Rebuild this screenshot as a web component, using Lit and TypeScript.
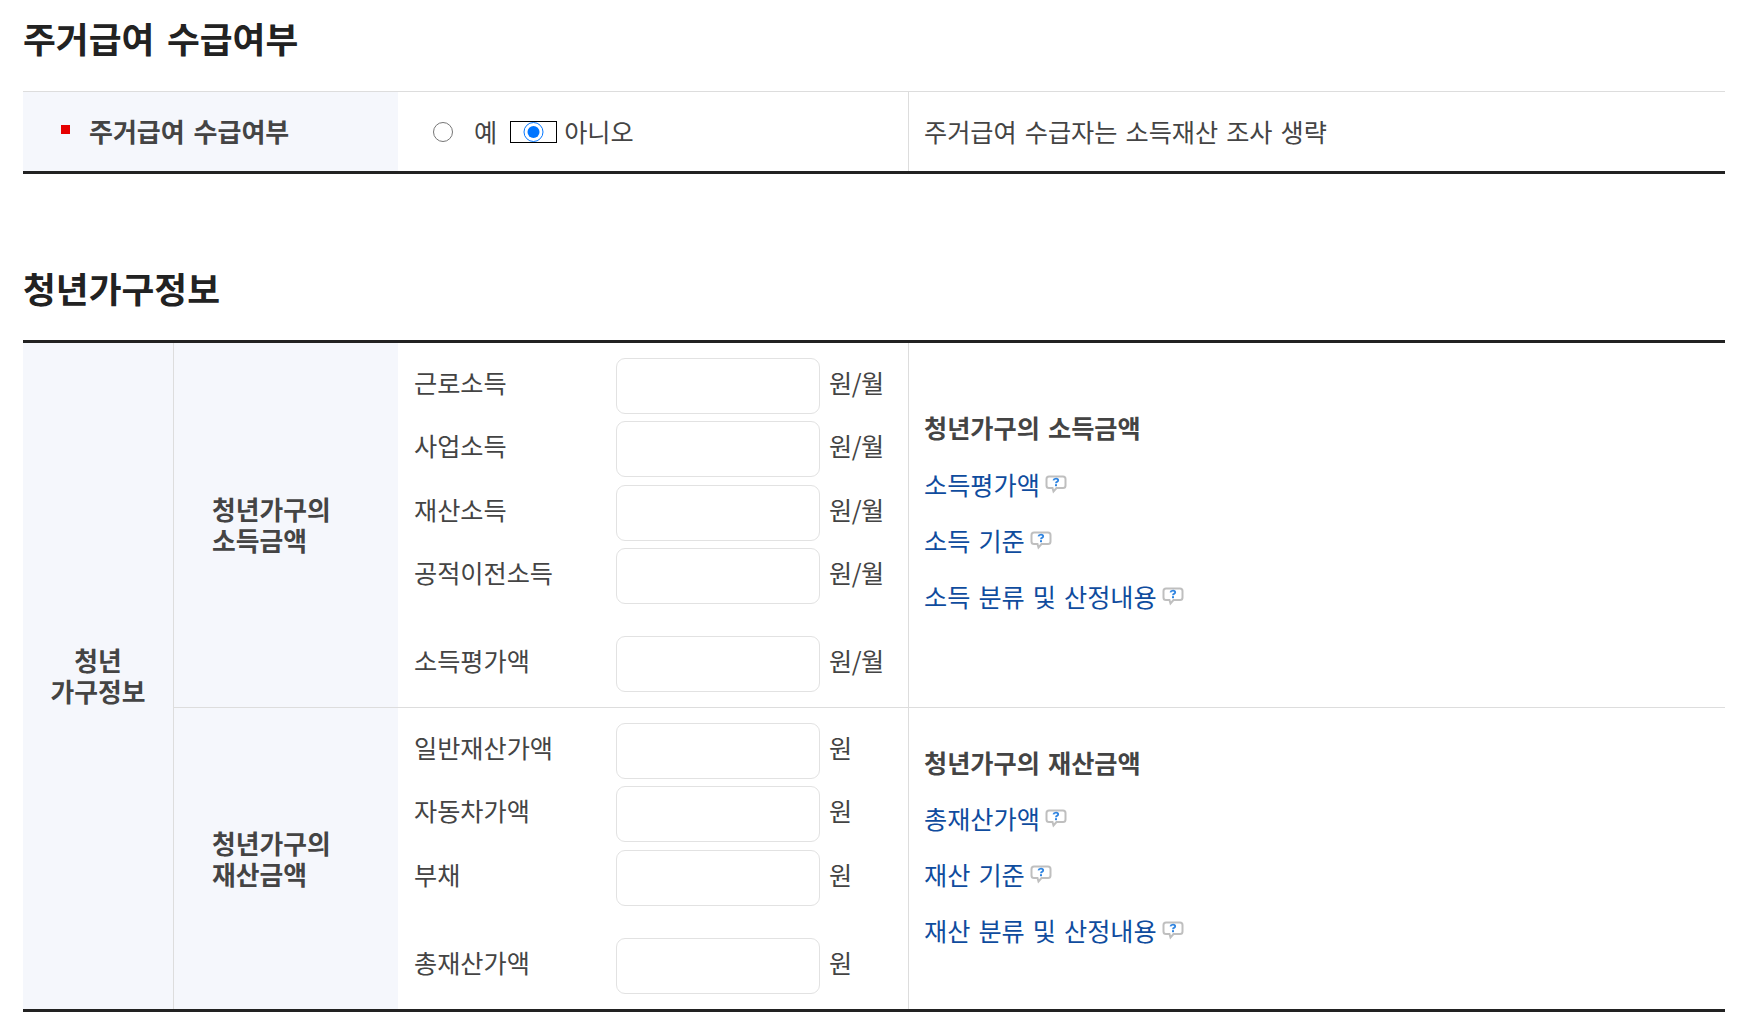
import { LitElement, html, css, svg } from "lit";
import { customElement } from "lit/decorators.js";

const helpIcon = html`<svg class="help" width="22" height="19" viewBox="0 0 22 19" aria-hidden="true">
  <path d="M4 1.5H18Q20.5 1.5 20.5 4V10.5Q20.5 13 18 13H11.5L8.5 16.5L7.5 13H4Q1.5 13 1.5 10.5V4Q1.5 1.5 4 1.5Z" fill="#fff" stroke="#bfbfbf" stroke-width="2"/>
  ${svg`<path d="M8.4 5.4Q8.8 3.6 11 3.6Q13.2 3.6 13.2 5.3Q13.2 6.3 12 6.8Q11 7.2 11 8.2" fill="none" stroke="#2f84e0" stroke-width="1.8"/><rect x="10" y="9.2" width="2" height="2" fill="#2f84e0"/>`}
</svg>`;

interface Field { label: string; unit: string; last?: boolean }

const income: Field[] = [
  { label: "근로소득", unit: "원/월" },
  { label: "사업소득", unit: "원/월" },
  { label: "재산소득", unit: "원/월" },
  { label: "공적이전소득", unit: "원/월" },
  { label: "소득평가액", unit: "원/월", last: true },
];
const assets: Field[] = [
  { label: "일반재산가액", unit: "원" },
  { label: "자동차가액", unit: "원" },
  { label: "부채", unit: "원" },
  { label: "총재산가액", unit: "원", last: true },
];

@customElement("app-root")
export class AppRoot extends LitElement {
  static styles = css`
    :host {
      display: block;
      width: 1746px;
      height: 1018px;
      box-sizing: border-box;
      padding: 0 21px 0 23px;
      background: #fff;
      font-family: "Noto Sans CJK KR", "Noto Sans", sans-serif;
      font-size: 25.2px;
      word-spacing: 2.4px;
      color: #444;
      overflow: hidden;
    }
    h2 {
      margin: 0;
      font-size: 35.7px;
      font-weight: 700;
      color: #222;
      line-height: 50px;
      word-spacing: 4.5px;
    }
    .t1 { padding-top: 13px; height: 91px; box-sizing: border-box; }
    .t2wrap { height: 166px; padding-top: 89px; box-sizing: border-box; }
    .single {
      display: grid;
      grid-template-columns: 375px 510px 1fr;
      height: 83px;
      box-sizing: border-box;
      border-top: 1px solid #ddd;
      border-bottom: 3px solid #222;
    }
    .th1 {
      background: #f5f7fc;
      font-weight: 700;
      font-size: 26px;
      word-spacing: 3px;
      display: flex;
      align-items: center;
      padding: 0 0 2px 38px;
      gap: 19px;
    }
    .bullet { width: 9px; height: 9px; background: #e60000; margin-top: -2px; }
    .radios {
      display: flex;
      align-items: center;
      padding-left: 35px;
    }
    .radios span { margin-top: -2px; }
    .radios input { margin: 0; width: 20px; height: 20px; }
    .radios .no { width: 45px; height: 20px; outline: 1px solid #000; margin-left: 14px; margin-right: 8px; }
    .radios .yes-l { margin-left: 21px; }
    .note {
      border-left: 1px solid #ddd;
      display: flex;
      align-items: center;
      padding: 0 0 2px 15px;
    }
    .main {
      display: grid;
      grid-template-columns: 151px 1fr;
      border-top: 3px solid #222;
      border-bottom: 3px solid #222;
      height: 672px;
      box-sizing: border-box;
    }
    .side, .gname { font-size: 25.8px; }
    .side {
      background: #f5f7fc;
      border-right: 1px solid #ddd;
      font-weight: 700;
      display: flex;
      align-items: center;
      justify-content: center;
      text-align: center;
      line-height: 31px;
      padding-bottom: 3px;
      box-sizing: border-box;
    }
    .groups { display: grid; grid-template-rows: 364px 1fr; }
    .group {
      display: grid;
      grid-template-columns: 224px 510px 1fr;
    }
    .group + .group { border-top: 1px solid #ddd; }
    .gname {
      background: #f5f7fc;
      font-weight: 700;
      line-height: 31px;
      padding: 0 0 2px 38px;
      display: flex;
      align-items: center;
    }
    .fields { padding: 15px 0 0 16px; }
    .field {
      display: grid;
      grid-template-columns: 202px 204px 1fr;
      align-items: center;
      height: 56px;
      margin-bottom: 7.4px;
    }
    .field.last { margin-top: 31.6px; }
    .group + .group .field.last { margin-top: 32.6px; }
    .field span { position: relative; top: -4px; white-space: nowrap; }
    .field .unit { padding-left: 9px; letter-spacing: -0.5px; }
    .field input {
      width: 204px;
      height: 56px;
      box-sizing: border-box;
      border: 1px solid #e2e2e2;
      border-radius: 9px;
      background: #fff;
      margin: 0;
      padding: 0;
    }
    .info {
      border-left: 1px solid #ddd;
      padding: 66px 0 0 15px;
    }
    .info.second { padding-top: 36px; }
    .info h3 { margin: 0 0 19px; font-size: inherit; font-weight: 700; line-height: 37px; }
    .info.second h3 { margin-bottom: 18px; }
    .info a {
      display: flex;
      align-items: center;
      gap: 5px;
      color: #0f4c9e;
      text-decoration: none;
      height: 37px;
      margin-bottom: 19.3px;
    }
    .help { margin-top: 1px; }
  `;

  private field(f: Field) {
    return html`<div class="field ${f.last ? "last" : ""}">
      <span>${f.label}</span><input type="text" /><span class="unit">${f.unit}</span>
    </div>`;
  }

  private link(text: string) {
    return html`<a href="#">${text}${helpIcon}</a>`;
  }

  render() {
    return html`
      <div class="t1"><h2>주거급여 수급여부</h2></div>
      <div class="single">
        <div class="th1"><i class="bullet"></i>주거급여 수급여부</div>
        <div class="radios">
          <input type="radio" name="r" /><span class="yes-l">예</span>
          <input class="no" type="radio" name="r" checked /><span>아니오</span>
        </div>
        <div class="note">주거급여 수급자는 소득재산 조사 생략</div>
      </div>
      <div class="t2wrap"><h2>청년가구정보</h2></div>
      <div class="main">
        <div class="side"><div>청년<br />가구정보</div></div>
        <div class="groups">
          <section class="group">
            <div class="gname"><div>청년가구의<br />소득금액</div></div>
            <div class="fields">${income.map((f) => this.field(f))}</div>
            <div class="info">
              <h3>청년가구의 소득금액</h3>
              ${this.link("소득평가액")}${this.link("소득 기준")}${this.link("소득 분류 및 산정내용")}
            </div>
          </section>
          <section class="group">
            <div class="gname"><div>청년가구의<br />재산금액</div></div>
            <div class="fields">${assets.map((f) => this.field(f))}</div>
            <div class="info second">
              <h3>청년가구의 재산금액</h3>
              ${this.link("총재산가액")}${this.link("재산 기준")}${this.link("재산 분류 및 산정내용")}
            </div>
          </section>
        </div>
      </div>
    `;
  }
}
